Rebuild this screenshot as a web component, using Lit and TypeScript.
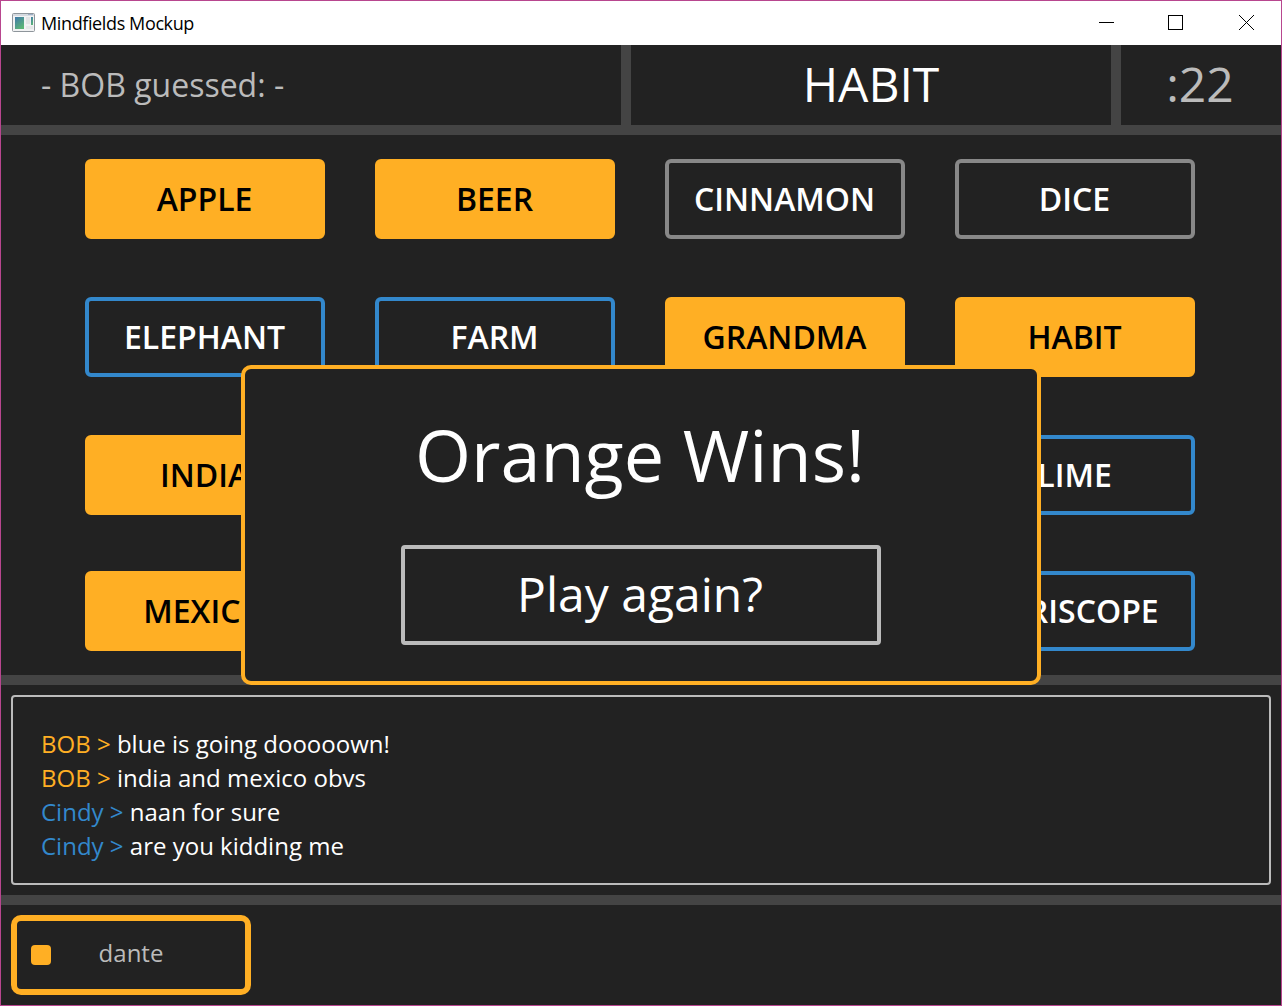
import { LitElement, html, css } from "lit";
import { customElement, property } from "lit/decorators.js";
import { classMap } from "lit/directives/class-map.js";

type Team = "orange" | "blue" | "neutral";

interface Tile {
  word: string;
  team: Team;
  revealed?: boolean;
}

interface Message {
  author: string;
  team: Team;
  text: string;
}

const ROWS: Tile[][] = [
  [
    { word: "APPLE", team: "orange", revealed: true },
    { word: "BEER", team: "orange", revealed: true },
    { word: "CINNAMON", team: "neutral" },
    { word: "DICE", team: "neutral" },
  ],
  [
    { word: "ELEPHANT", team: "blue" },
    { word: "FARM", team: "blue" },
    { word: "GRANDMA", team: "orange", revealed: true },
    { word: "HABIT", team: "orange", revealed: true },
  ],
  [
    { word: "INDIA", team: "orange", revealed: true },
    { word: "LIME", team: "blue" },
  ],
  [
    { word: "MEXICO", team: "orange", revealed: true },
    { word: "PERISCOPE", team: "blue" },
  ],
];

const MESSAGES: Message[] = [
  { author: "BOB", team: "orange", text: "blue is going dooooown!" },
  { author: "BOB", team: "orange", text: "india and mexico obvs" },
  { author: "Cindy", team: "blue", text: "naan for sure" },
  { author: "Cindy", team: "blue", text: "are you kidding me" },
];

@customElement("window-bar")
export class WindowBar extends LitElement {
  @property() caption = "";

  static styles = css`
    :host {
      display: flex;
      align-items: center;
      height: 44px;
      background: #fff;
      color: #000;
    }
    .icon {
      display: block;
      margin: 0 6px 2px 11px;
    }
    .caption {
      flex: 1;
      font: 18px/24px "Open Sans", sans-serif;
      letter-spacing: -0.38px;
      padding-bottom: 1px;
    }
    .controls {
      display: block;
    }
  `;

  render() {
    return html`
      <svg class="icon" width="23" height="19" viewBox="0 0 23 19">
        <defs>
          <linearGradient id="pane" x1="0" y1="0" x2="0.6" y2="1">
            <stop offset="0" stop-color="#4078ac" />
            <stop offset="1" stop-color="#5bb576" />
          </linearGradient>
        </defs>
        <rect x="0.5" y="0.5" width="22" height="18" rx="1" fill="#f1f2f3" stroke="#8e959b" />
        <rect x="1" y="1" width="21" height="2" fill="#d5dae0" />
        <rect x="16" y="1" width="5" height="1" fill="#9fb0c8" />
        <rect x="3" y="4" width="9" height="12" fill="url(#pane)" />
        <rect x="14" y="4" width="4" height="7" fill="#e3e4e5" />
        <rect x="19" y="4" width="2" height="8" fill="url(#pane)" />
        <rect x="14" y="13" width="7" height="3" fill="#e6e7e8" />
      </svg>
      <div class="caption">${this.caption}</div>
      <svg class="controls" width="190" height="44" viewBox="0 0 190 44" fill="none" stroke="#000">
        <path d="M8 21.5h15" />
        <rect x="77.5" y="14.5" width="14" height="14" />
        <path d="M148 14l15 15M163 14l-15 15" />
      </svg>
    `;
  }
}

@customElement("word-tile")
export class WordTile extends LitElement {
  @property() word = "";
  @property() team: Team = "neutral";
  @property({ type: Boolean }) revealed = false;

  static styles = css`
    :host {
      display: block;
    }
    .tile {
      box-sizing: border-box;
      display: flex;
      align-items: center;
      justify-content: center;
      width: 240px;
      height: 80px;
      padding-right: 1px;
      border: 4px solid #888;
      border-radius: 6px;
      color: #fff;
      font: 600 32px/44px "Open Sans", sans-serif;
    }
    .blue {
      border-color: #3388cc;
    }
    .orange {
      border-color: #ffaf24;
    }
    .revealed {
      background: #ffaf24;
      color: #000;
    }
  `;

  render() {
    return html`<div
      class=${classMap({ tile: true, [this.team]: true, revealed: this.revealed })}
    >
      ${this.word}
    </div>`;
  }
}

@customElement("app-root")
export class AppRoot extends LitElement {
  static styles = css`
    :host {
      display: block;
    }
    .window {
      box-sizing: border-box;
      position: relative;
      display: flex;
      flex-direction: column;
      width: 1282px;
      height: 1006px;
      border: 1px solid #b8468f;
      background: #444;
      color: #fff;
      font-family: "Open Sans", sans-serif;
      overflow: hidden;
    }
    .game {
      flex: 1;
      display: grid;
      grid-template-rows: 80px 540px 210px 100px;
      gap: 10px;
    }
    .top {
      display: grid;
      grid-template-columns: 620px 480px 160px;
      gap: 10px;
    }
    .cell {
      box-sizing: border-box;
      display: flex;
      align-items: center;
      justify-content: center;
      padding-bottom: 2px;
      background: #222;
      font-size: 48px;
      line-height: 64px;
    }
    .guess {
      justify-content: flex-start;
      padding: 0 0 0 40px;
      font-size: 32px;
      line-height: 44px;
      color: #bbb;
    }
    .clock {
      padding-right: 2px;
      color: #bbb;
    }
    .board {
      display: grid;
      grid-template-rows: 80px 80px 80px 80px;
      align-content: start;
      row-gap: 58px;
      padding: 24px 84px 0;
      background: #222;
    }
    .row {
      display: flex;
      justify-content: space-between;
      width: 1110px;
    }
    .row:last-child {
      margin-top: -2px;
    }
    .chat {
      padding: 10px;
      background: #222;
    }
    .log {
      box-sizing: border-box;
      height: 190px;
      padding: 30px 28px;
      border: 2px solid #bbb;
      border-radius: 4px;
      font-size: 24px;
      line-height: 34px;
    }
    .orange {
      color: #ffaf24;
    }
    .blue {
      color: #3388cc;
    }
    .players {
      padding: 10px;
      background: #222;
    }
    .player {
      box-sizing: border-box;
      display: grid;
      grid-template-columns: 20px 1fr 20px;
      align-items: center;
      width: 240px;
      height: 80px;
      padding: 0 14px;
      border: 6px solid #ffaf24;
      border-radius: 10px;
      color: #bbb;
      font-size: 24px;
      line-height: 34px;
      text-align: center;
    }
    .badge {
      height: 20px;
      border-radius: 4px;
      background: #ffaf24;
    }
    .name {
      padding-bottom: 4px;
    }
    .dialog {
      box-sizing: border-box;
      position: absolute;
      left: 240px;
      top: 364px;
      width: 800px;
      height: 320px;
      display: flex;
      flex-direction: column;
      align-items: center;
      justify-content: space-between;
      padding: 35px 36px 36px;
      border: 4px solid #ffaf24;
      border-radius: 10px;
      background: #222;
    }
    .result {
      padding-right: 2px;
      font-size: 72px;
      line-height: 100px;
    }
    .again {
      box-sizing: border-box;
      width: 480px;
      height: 100px;
      padding: 0 2px 2px 0;
      border: 4px solid #bbb;
      border-radius: 4px;
      background: #222;
      color: #fff;
      font: 48px/64px "Open Sans", sans-serif;
    }
  `;

  render() {
    return html`
      <div class="window">
        <window-bar caption="Mindfields Mockup"></window-bar>
        <div class="game">
          <div class="top">
            <div class="cell guess">- BOB guessed: -</div>
            <div class="cell">HABIT</div>
            <div class="cell clock">:22</div>
          </div>
          <div class="board">
            ${ROWS.map(
              (row) => html`<div class="row">
                ${row.map(
                  (t) => html`<word-tile
                    .word=${t.word}
                    .team=${t.team}
                    .revealed=${!!t.revealed}
                  ></word-tile>`
                )}
              </div>`
            )}
          </div>
          <div class="chat">
            <div class="log">
              ${MESSAGES.map(
                (m) => html`<div><span class=${m.team}>${m.author} &gt;</span> ${m.text}</div>`
              )}
            </div>
          </div>
          <div class="players">
            <div class="player">
              <span class="badge"></span>
              <span class="name">dante</span>
            </div>
          </div>
        </div>
        <div class="dialog">
          <div class="result">Orange Wins!</div>
          <button class="again">Play again?</button>
        </div>
      </div>
    `;
  }
}
